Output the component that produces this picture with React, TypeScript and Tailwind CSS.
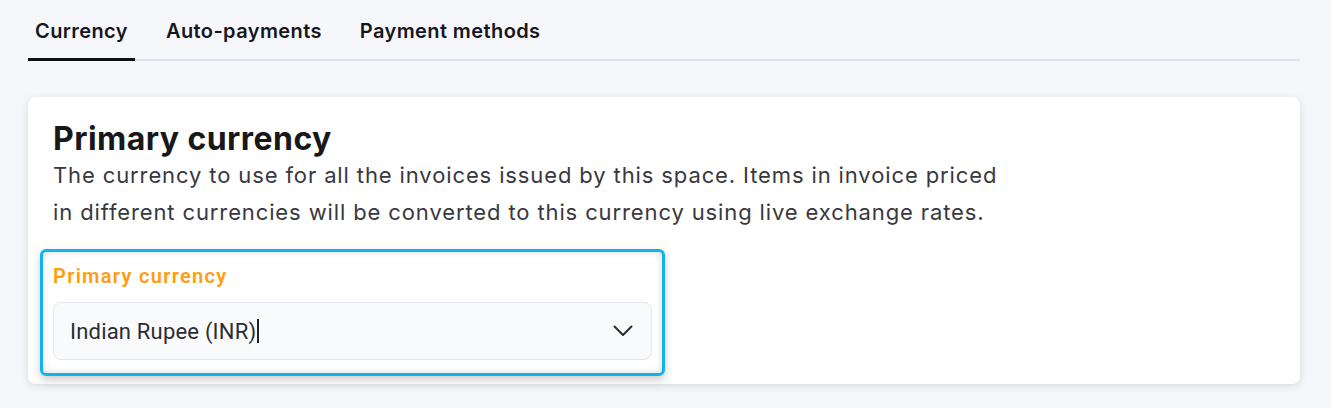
import React from "react";

export default function App() {
  return (
    <div className="min-h-[408px] w-full bg-[#f6f7fb] px-[28px] pt-[12px]" style={{ fontFamily: "Inter, 'Noto Sans', sans-serif" }}>
      <div className="mr-[3px] flex border-b-2 border-[#dde2ec]">
        {["Currency", "Auto-payments", "Payment methods"].map((t, i) => (
          <div
            key={t}
            className={
              "mr-[24px] -mb-[2px] px-[7px] pb-[12px] pt-[4px] text-[20px] font-semibold leading-[30px] tracking-[0.4px] text-[#16161d] " +
              (i === 0 ? "border-b-[3px] border-[#0f0f14]" : "border-b-[3px] border-transparent")
            }
          >
            {t}
          </div>
        ))}
      </div>
      <div className="mt-[36px] mr-[3px] rounded-[8px] bg-white px-[12px] pb-[8px] pt-[24px] shadow-[0_2px_8px_rgba(0,0,0,0.12)]">
        <div className="px-[13px]">
          <h1 className="text-[32px] font-bold leading-[36px] tracking-[0.45px] text-[#18181b]">Primary currency</h1>
          <p className="w-[960px] text-[22px] leading-[37px] tracking-[0.88px] text-[#38383e]">
            The currency to use for all the invoices issued by this space. Items in invoice priced in different currencies will be converted to this currency using live exchange rates.
          </p>
        </div>
        <div
          className="mt-[18px] w-[625px] rounded-[6px] border-[3px] border-[#10b3ec] px-[10px] pb-[13px] pt-[12px] shadow-[0_4px_8px_rgba(0,0,0,0.2),inset_0_0_7px_rgba(0,0,0,0.16)]"
          style={{ fontFamily: "Roboto, 'Noto Sans', sans-serif" }}
        >
          <div className="text-[20px] font-semibold leading-[24px] tracking-[1.3px] text-[#ff9d0a]">Primary currency</div>
          <div className="mt-[14px] flex h-[58px] items-center justify-between rounded-[8px] border border-[#e1e5ef] bg-[#f9fafc] pl-[16px] pr-[18px]">
            <span className="flex items-center text-[22px] tracking-[0.2px] text-[#2c2c33]">
              Indian Rupee (INR)
              <span className="ml-[1px] inline-block h-[24px] w-[1.5px] bg-[#222]" />
            </span>
            <svg width="20" height="12" viewBox="0 0 20 12" fill="none" stroke="#2c2c33" strokeWidth="2" strokeLinecap="round" strokeLinejoin="round">
              <path d="M1.5 1.5L10 10l8.5-8.5" />
            </svg>
          </div>
        </div>
      </div>
    </div>
  );
}
